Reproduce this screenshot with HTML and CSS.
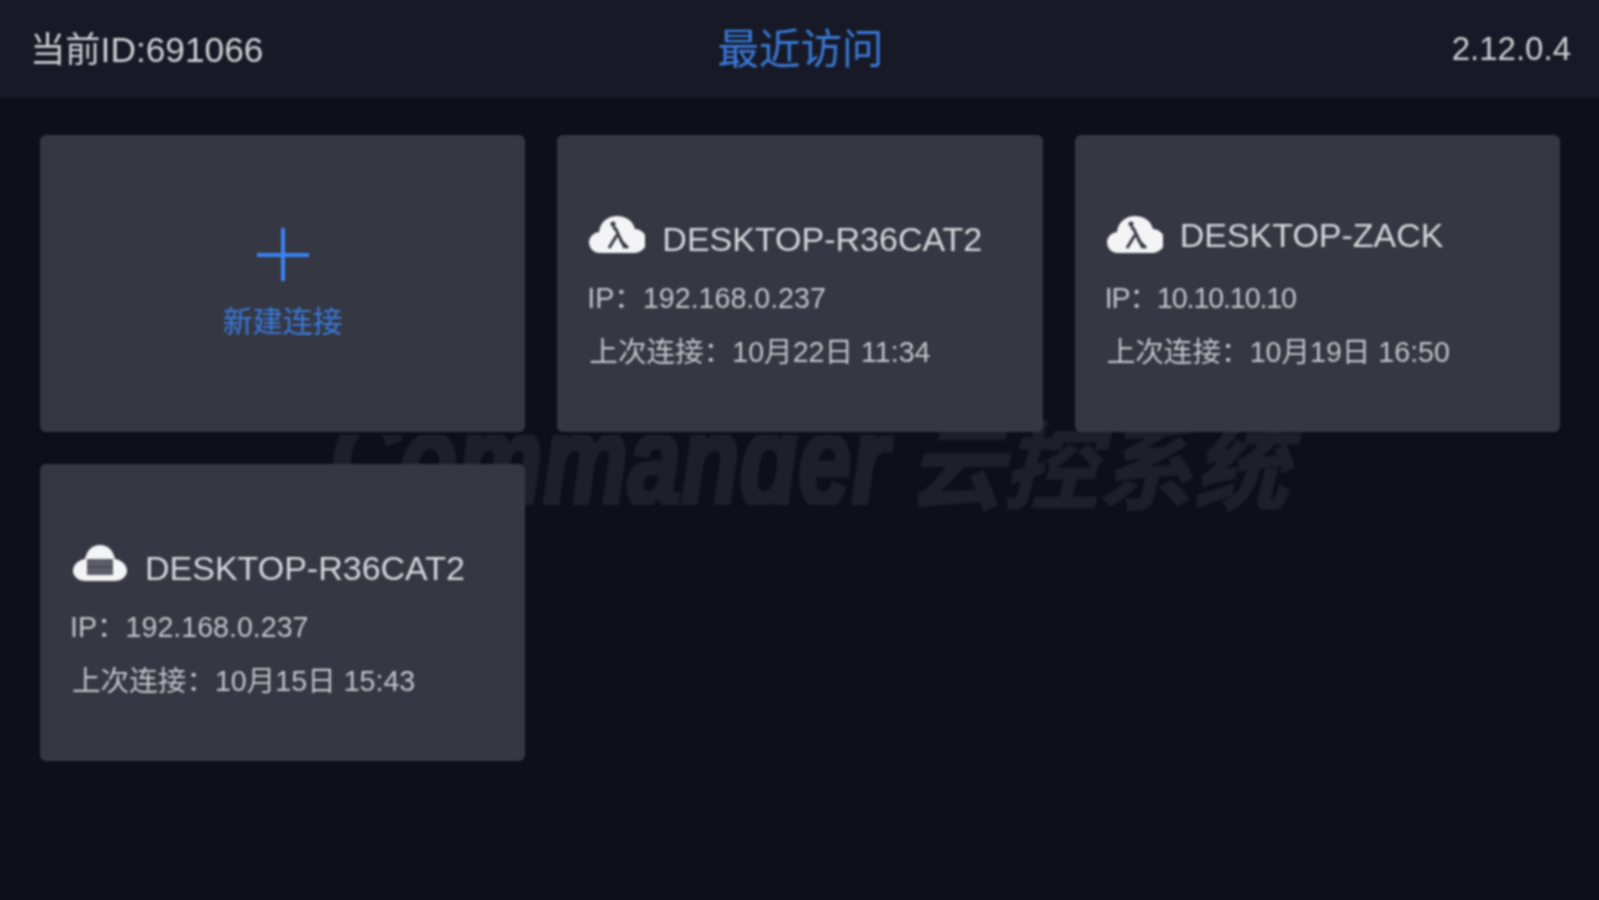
FILE: index.html
```html
<!DOCTYPE html>
<html>

<head>
    <meta charset="utf-8" />
    <title>最近访问</title>
    <link rel="stylesheet" href="styles.css">
</head>

<body>
    <div class="main">
        <!-- Top bar -->
        <div class="top-bar">
            <span class="current-id">当前ID:691066</span>
            <span class="page-title">最近访问</span>
            <span class="version">2.12.0.4</span>
        </div>
        <!-- Watermark sits behind the cards -->
        <div class="watermark">
            <span class="watermark-latin">Commander</span>
            <span class="watermark-cjk">云控系统</span>
        </div>
        <div class="card-grid">
            <div class="card new-card">
                <span class="plus"></span>
                <span class="new-label">新建连接</span>
            </div>
            <div class="card">
                <div class="name-row">
                    <svg class="cloud" viewBox="0 0 56 38">
                        <path class="cloud-body" d="M11 38A10.500 10.500 0 0 1 10 17C11 7 19 1 28 1C37 1 44 6 46 14A12 12 0 0 1 45 38Z" />
                        <circle class="cloud-head" cx="24" cy="9" r="2.500" />
                        <path class="cloud-figure" d="M24 12C27 13 28 16 29 19L36 33M28 20L20 33M31 25L39 33" />
                    </svg>
                    <span class="name">DESKTOP-R36CAT2</span>
                </div>
                <div class="info info-ip">IP：192.168.0.237</div>
                <div class="info">上次连接：10月22日 11:34</div>
            </div>
            <div class="card">
                <div class="name-row">
                    <svg class="cloud" viewBox="0 0 56 38">
                        <path class="cloud-body" d="M11 38A10.500 10.500 0 0 1 10 17C11 7 19 1 28 1C37 1 44 6 46 14A12 12 0 0 1 45 38Z" />
                        <circle class="cloud-head" cx="24" cy="9" r="2.500" />
                        <path class="cloud-figure" d="M24 12C27 13 28 16 29 19L36 33M28 20L20 33M31 25L39 33" />
                    </svg>
                    <span class="name name-raised">DESKTOP-ZACK</span>
                </div>
                <div class="info info-ip info-tight">IP：10.10.10.10</div>
                <div class="info">上次连接：10月19日 16:50</div>
            </div>
            <div class="card">
                <div class="name-row">
                    <svg class="cloud" viewBox="0 0 56 38">
                        <path class="cloud-body" d="M14 37C6 37 1 32 1 27C1 21 6 16 13 15C15 6 20 1 28 1C36 1 41 6 43 15C50 16 55 21 55 27C55 32 50 37 42 37Z" />
                        <rect class="cloud-screen" x="15" y="15" width="26" height="16" />
                        <path class="cloud-screen-line" d="M15 23H41" />
                    </svg>
                    <span class="name">DESKTOP-R36CAT2</span>
                </div>
                <div class="info info-ip">IP：192.168.0.237</div>
                <div class="info">上次连接：10月15日 15:43</div>
            </div>
        </div>
    </div>
</body>

</html>
```

FILE: styles.css
```css
* {
    padding: 0;
    margin: 0;
    box-sizing: border-box;
    font-family: "Liberation Sans", "Noto Sans CJK SC", sans-serif;
}

html,
body {
    height: 100%;
    overflow: hidden;
    background-color: #0d101b;
}

.main {
    position: relative;
    height: 900px;
    filter: blur(1px);
}

/* bar runs past the window edge so the blur doesn't fade its border */
.top-bar {
    display: grid;
    grid-template-columns: 1fr auto 1fr;
    align-items: center;
    height: 104px;
    margin: -6px -6px 0;
    padding: 6px 34px 0 36px;
    background-color: #171a26;
    color: #cfd0d3;
    font-size: 33px;
}

.current-id {
    padding-bottom: 6px;
    font-size: 35.3px;
}

.page-title {
    padding-bottom: 6px;
    font-size: 41.5px;
    color: #3a78d6;
}

.version {
    text-align: right;
}

.watermark {
    position: absolute;
    left: 330px;
    top: 431px;
    display: flex;
    align-items: center;
    height: 90px;
    color: #1d1f2a;
    white-space: nowrap;
}

/* the logo's d has no ascender, so the tops of the letters are trimmed */
.watermark-latin {
    width: 760px;
    height: 70px;
    margin-right: -182px;
    font-size: 129px;
    line-height: 50px;
    font-weight: bold;
    font-style: italic;
    -webkit-text-stroke: 5px #1d1f2a;
    clip-path: inset(0);
    transform: scaleX(0.742);
    transform-origin: left center;
}

.watermark-cjk {
    margin-top: -20px;
    font-size: 95px;
    font-weight: bold;
    font-style: italic;
    -webkit-text-stroke: 2px #1d1f2a;
}

.card-grid {
    position: relative;
    display: grid;
    grid-template-columns: repeat(3, 1fr);
    grid-auto-rows: 297px;
    gap: 32px;
    padding: 37px 39px 0 40px;
}

.card {
    display: flex;
    flex-direction: column;
    justify-content: center;
    padding: 28px 32px 0;
    background-color: #353743;
    border-radius: 6px;
    color: #c3c4c8;
    font-size: 28.6px;
}

.new-card {
    align-items: center;
    padding-top: 0;
}

.plus {
    width: 52px;
    height: 53px;
    margin-top: 2px;
    margin-bottom: 16px;
    background:
        linear-gradient(#3b82f0, #3b82f0) center / 52px 4px no-repeat,
        linear-gradient(#3b82f0, #3b82f0) center / 4px 53px no-repeat;
}

.new-label {
    font-size: 30px;
    color: #3a78d6;
}

.name-row {
    display: flex;
    align-items: center;
    height: 44px;
    margin-bottom: 10px;
}

.cloud {
    flex: none;
    width: 56px;
    height: 38px;
    margin-top: -10px;
    margin-right: 17px;
}

.cloud-body {
    fill: #f4f4f6;
}

.cloud-head {
    fill: #353743;
}

.cloud-figure {
    fill: none;
    stroke: #353743;
    stroke-width: 3;
}

.cloud-screen {
    fill: #5b5d68;
}

.cloud-screen-line {
    stroke: #454752;
    stroke-width: 1.5;
}

.name {
    margin-top: 2px;
    font-size: 34px;
    color: #d6d7da;
}

.name-raised {
    margin-top: 0;
    padding-bottom: 6px;
}

.info {
    height: 54px;
    line-height: 54px;
    white-space: nowrap;
}

.info-ip {
    margin-left: -2px;
}

.info-tight {
    letter-spacing: -1.1px;
}
```
